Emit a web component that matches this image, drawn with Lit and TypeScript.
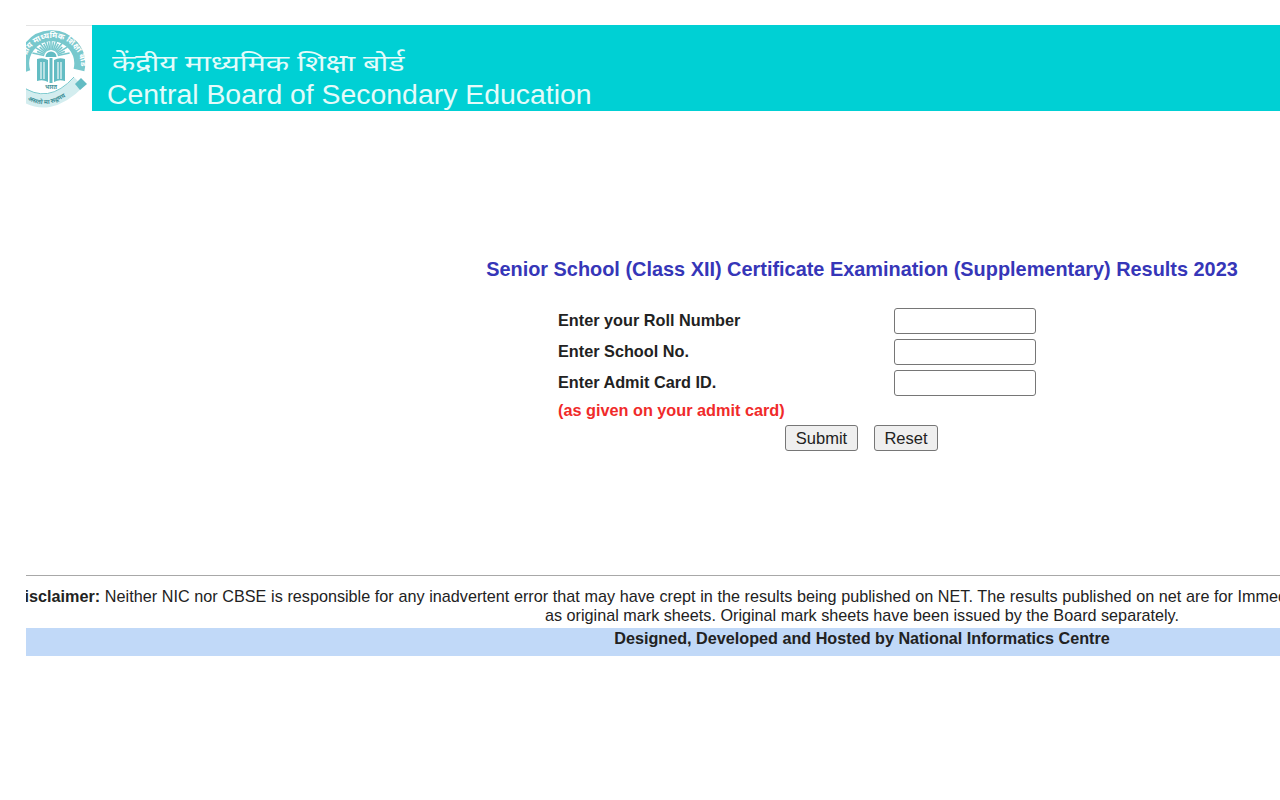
import { LitElement, html, css, svg } from "lit";
import { customElement } from "lit/decorators.js";

const rays = Array.from({ length: 17 }, (_, i) => {
  const a = (-168 + (i * 156) / 16) * (Math.PI / 180);
  const len = i % 2 ? 15 : 19;
  const x1 = 25 + 7 * Math.cos(a), y1 = 31 + 7 * Math.sin(a);
  const x2 = 25 + len * Math.cos(a), y2 = 31 + len * Math.sin(a);
  return svg`<line x1=${x1} y1=${y1} x2=${x2} y2=${y2}></line>`;
});

@customElement("app-root")
export class AppRoot extends LitElement {
  static styles = css`
    :host { display: block; width: 1280px; height: 800px; overflow: hidden; background: #fff; font-family: "Liberation Sans", Arial, sans-serif; color: #222; }
    .page { width: 1672px; margin-left: 26px; padding-top: 25px; }
    .header { display: flex; height: 86px; }
    .logo { box-sizing: border-box; width: 66px; flex: none; overflow: hidden; border-top: 1px solid #e4e4e4; }
    .logo svg { display: block; }
    .brand { flex: 1; background: #00d0d4; color: #e4fbfa; display: flex; flex-direction: column; padding: 25px 0 0 15px; }
    .hi { font-family: "Noto Sans", "DejaVu Sans", "Noto Sans CJK SC", sans-serif; font-size: 23px; line-height: 25px; margin-left: 5px; font-weight: 400; transform: scaleX(1.32); transform-origin: left center; }
    .en { font-size: 28.4px; line-height: 30px; margin-top: 4px; }
    h1 { margin: 146px 0 0; font-size: 19.9px; line-height: 24px; font-weight: 700; text-align: center; color: #3636b8; }
    form { margin: 27px 0 0 532px; display: grid; grid-template-columns: 336px 142px; row-gap: 5px; font-size: 16.25px; font-weight: 700; }
    label { box-sizing: border-box; display: flex; align-items: center; height: 26px; padding-bottom: 2px; }
    input { box-sizing: border-box; width: 142px; height: 26px; margin: 0; padding: 0 4px; border: 1px solid #767676; border-radius: 3px; background: #fff; }
    .note { grid-column: 1 / -1; color: #f02a2a; line-height: 18px; height: 20px; }
    .actions { grid-column: 1 / -1; display: flex; gap: 16px; padding-left: 227px; margin-top: -1px; }
    button { box-sizing: border-box; height: 26px; margin: 0; padding: 0; border: 1px solid #767676; border-radius: 3px; background: #efefef; color: #222; font: 400 16.5px "Liberation Sans", Arial, sans-serif; }
    .submit { width: 73px; }
    .reset { width: 64px; }
    hr { margin: 124px 0 0; border: 0; border-top: 1px solid #a8a8a8; height: 1px; }
    .disclaimer { display: flex; justify-content: center; overflow: hidden; margin-top: 10px; font-size: 16.2px; line-height: 19px; }
    .disclaimer p { flex: none; margin: 0; text-align: center; white-space: nowrap; }
    .first { word-spacing: 0.17px; }
    .footer { height: 28px; margin-top: 3px; background: #c1d9f8; text-align: center; font-size: 16.2px; font-weight: 700; line-height: 20px; }
    .band { fill: none; stroke: #78c8cd; stroke-width: 11; }
    .ribbon { fill: none; stroke: #d3edef; stroke-width: 13; }
    .edge { fill: none; stroke: #78c8cd; stroke-width: 1; }
    .ink { fill: #63bcc3; stroke: none; }
    .rays { stroke: #78c8cd; stroke-width: 1.6; }
    .stripe { stroke: #fff; stroke-width: 1.1; }
    .ring { font: 700 8px "Noto Sans", "DejaVu Sans", sans-serif; fill: #fff; }
    .low { font: 700 6.2px "Noto Sans", "DejaVu Sans", sans-serif; fill: #3d8f97; }
    .mid { font: 700 5.6px "Noto Sans", "DejaVu Sans", sans-serif; fill: #3d8f97; }
  `;

  render() {
    return html`
      <div class="page">
        <header class="header">
          <div class="logo">
            <svg width="66" height="85" viewBox="0 0 66 85">
              <path class="band" d="M-1 46 A28 28 0 1 1 53 44"></path>
              <path class="ribbon" d="M-6 66 Q22 88 53 56"></path>
              <path class="ink" d="M49 58 l6 -6 l6 6 l-7 6 z"></path>
              <path class="edge" d="M-6 59 Q22 80 48 51"></path>
              <path id="arc" d="M-1 48 A28.5 28.5 0 1 1 54 48" fill="none"></path>
              <path id="arcb" d="M-5 69 Q22 91 52 60" fill="none"></path>
              <text class="ring"><textPath href="#arc" startOffset="10">केन्द्रीय माध्यमिक शिक्षा बोर्ड</textPath></text>
              <text class="low"><textPath href="#arcb" startOffset="8">असतो मा सद्गमय</textPath></text>
              <g class="rays">${rays}</g>
              <path class="ink" d="M19.5 31 a5.5 5.5 0 0 1 11 0 z"></path>
              <path class="ink" d="M11 33 Q17 31 22 34 V56 Q17 53 11 55 z M39 33 Q33 31 28 34 V56 Q33 53 39 55 z"></path>
              <path class="ink" d="M23.5 32 h3 v25 h-3 z"></path>
              <path class="stripe" d="M15 36 v17 M18 36 v17 M32 36 v17 M35 36 v17"></path>
              <text class="mid" x="25" y="63" text-anchor="middle">भारत</text>
            </svg>
          </div>
          <div class="brand">
            <div class="hi" lang="hi">केंद्रीय माध्यमिक शिक्षा बोर्ड</div>
            <div class="en">Central Board of Secondary Education</div>
          </div>
        </header>
        <h1>Senior School (Class XII) Certificate Examination (Supplementary) Results 2023</h1>
        <form @submit=${(e: Event) => e.preventDefault()}>
          <label for="roll">Enter your Roll Number</label><input id="roll" type="text" />
          <label for="school">Enter School No.</label><input id="school" type="text" />
          <label for="admit">Enter Admit Card ID.</label><input id="admit" type="text" />
          <div class="note">(as given on your admit card)</div>
          <div class="actions">
            <button class="submit" type="submit">Submit</button>
            <button class="reset" type="reset">Reset</button>
          </div>
        </form>
        <hr />
        <div class="disclaimer">
          <p><span class="first"><b>Disclaimer:</b> Neither NIC nor CBSE is responsible for any inadvertent error that may have crept in the results being published on NET. The results published on net are for Immediate information to the candidates. These cannot be treated</span><br />as original mark sheets. Original mark sheets have been issued by the Board separately.</p>
        </div>
        <div class="footer">Designed, Developed and Hosted by National Informatics Centre</div>
      </div>
    `;
  }
}
